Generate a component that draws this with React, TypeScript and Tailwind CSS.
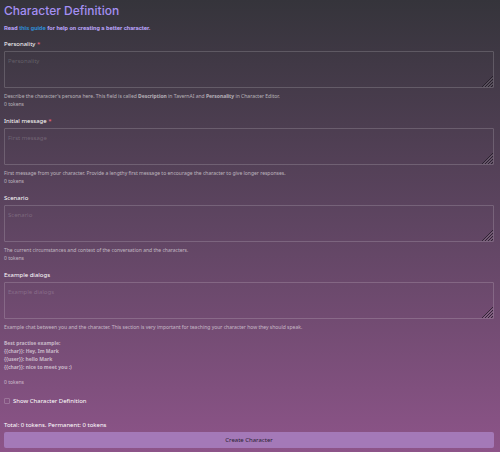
import { useState } from 'react';
import type { ReactNode } from 'react';

type FieldProps = {
  id: string;
  label: string;
  placeholder: string;
  required?: boolean;
  children: ReactNode;
};

const Field = ({ id, label, placeholder, required, children }: FieldProps) => (
  <div className="flex flex-col">
    <label htmlFor={id} className="mb-[3px] text-[6px] leading-[8px] text-white">
      {label}
      {required && <span className="text-[#ff6b85]"> *</span>}
    </label>
    <div className="relative flex">
      <textarea
        id={id}
        placeholder={placeholder}
        className="h-[37px] w-full resize-none rounded-[1px] border border-white/17 bg-transparent px-[3px] py-[5px] text-[6px] leading-[8px] text-white outline-none placeholder:text-white/20"
      />
      {/* Resize grip */}
      <svg className="pointer-events-none absolute right-px bottom-px h-3 w-3" viewBox="0 0 12 12" fill="none">
        <path d="M1 12L12 1M4 12L12 4M7 12L12 7M10 12L12 10" stroke="#1b1520" strokeOpacity="0.7" />
        <path d="M2.5 12L12 2.5M5.5 12L12 5.5M8.5 12L12 8.5" stroke="#fff" strokeOpacity="0.3" strokeWidth="0.7" />
      </svg>
    </div>
    <div className="mt-1 text-[5px] leading-[8px] text-white/60">{children}</div>
  </div>
);

const App = () => {
  const [showDefinition, setShowDefinition] = useState(false);

  return (
    <main className="min-h-screen bg-linear-to-b from-[#35343b] via-[#5f4562] to-[#8d5489] pt-1 pr-1.5 pb-1 pl-1 font-['Noto_Sans',sans-serif]">
      <h1 className="font-['Inter',sans-serif] text-[12px] leading-[14px] font-medium text-[#a48ff2]">
        Character Definition
      </h1>
      <p className="mt-1.5 font-['Roboto',sans-serif] text-[6px] leading-[8px] font-bold text-[#b9a2f8]">
        Read <a href="#guide" className="text-[#2f8ad0]">this guide</a> for help on creating a better character.
      </p>

      <form className="mt-2 flex flex-col" onSubmit={(e) => e.preventDefault()}>
        <div className="flex flex-col gap-[9px]">
          <Field id="personality" label="Personality" placeholder="Personality" required>
            <p>
              Describe the character's persona here. This field is called <b>Description</b> in TavernAI and{' '}
              <b>Personality</b> in Character Editor.
            </p>
            <p>0 tokens</p>
          </Field>
          <Field id="first-message" label="Initial message" placeholder="First message" required>
            <p>
              First message from your character. Provide a lengthy first message to encourage the character to give
              longer responses.
            </p>
            <p>0 tokens</p>
          </Field>
          <Field id="scenario" label="Scenario" placeholder="Scenario">
            <p>The current circumstances and context of the conversation and the characters.</p>
            <p>0 tokens</p>
          </Field>
          <Field id="dialogs" label="Example dialogs" placeholder="Example dialogs">
            <p>
              Example chat between you and the character. This section is very important for teaching your character
              how they should speak.
            </p>
            <p className="mt-2 font-bold">
              Best practise example:
              <br />
              {'{{char}}: Hey, Im Mark'}
              <br />
              {'{{user}}: hello Mark'}
              <br />
              {'{{char}}: nice to meet you :)'}
            </p>
            <p className="mt-[7px]">0 tokens</p>
          </Field>
        </div>

        <label className="mt-[11px] flex items-center gap-[3px] self-start text-[6px] leading-[8px] text-white">
          <input
            type="checkbox"
            checked={showDefinition}
            onChange={(e) => setShowDefinition(e.target.checked)}
            className="h-1.5 w-1.5 appearance-none rounded-[1px] border border-white/20 checked:bg-[#a479b8]"
          />
          Show Character Definition
        </label>

        <p className="mt-4 text-[6px] leading-[8px] text-white">Total: 0 tokens. Permanent: 0 tokens</p>
        <button type="submit" className="mt-[3px] h-4 w-full rounded-[2px] bg-[#a479b8] text-[6px] leading-[8px] text-[#2b1f33]">
          Create Character
        </button>
      </form>
    </main>
  );
};

export default App;
